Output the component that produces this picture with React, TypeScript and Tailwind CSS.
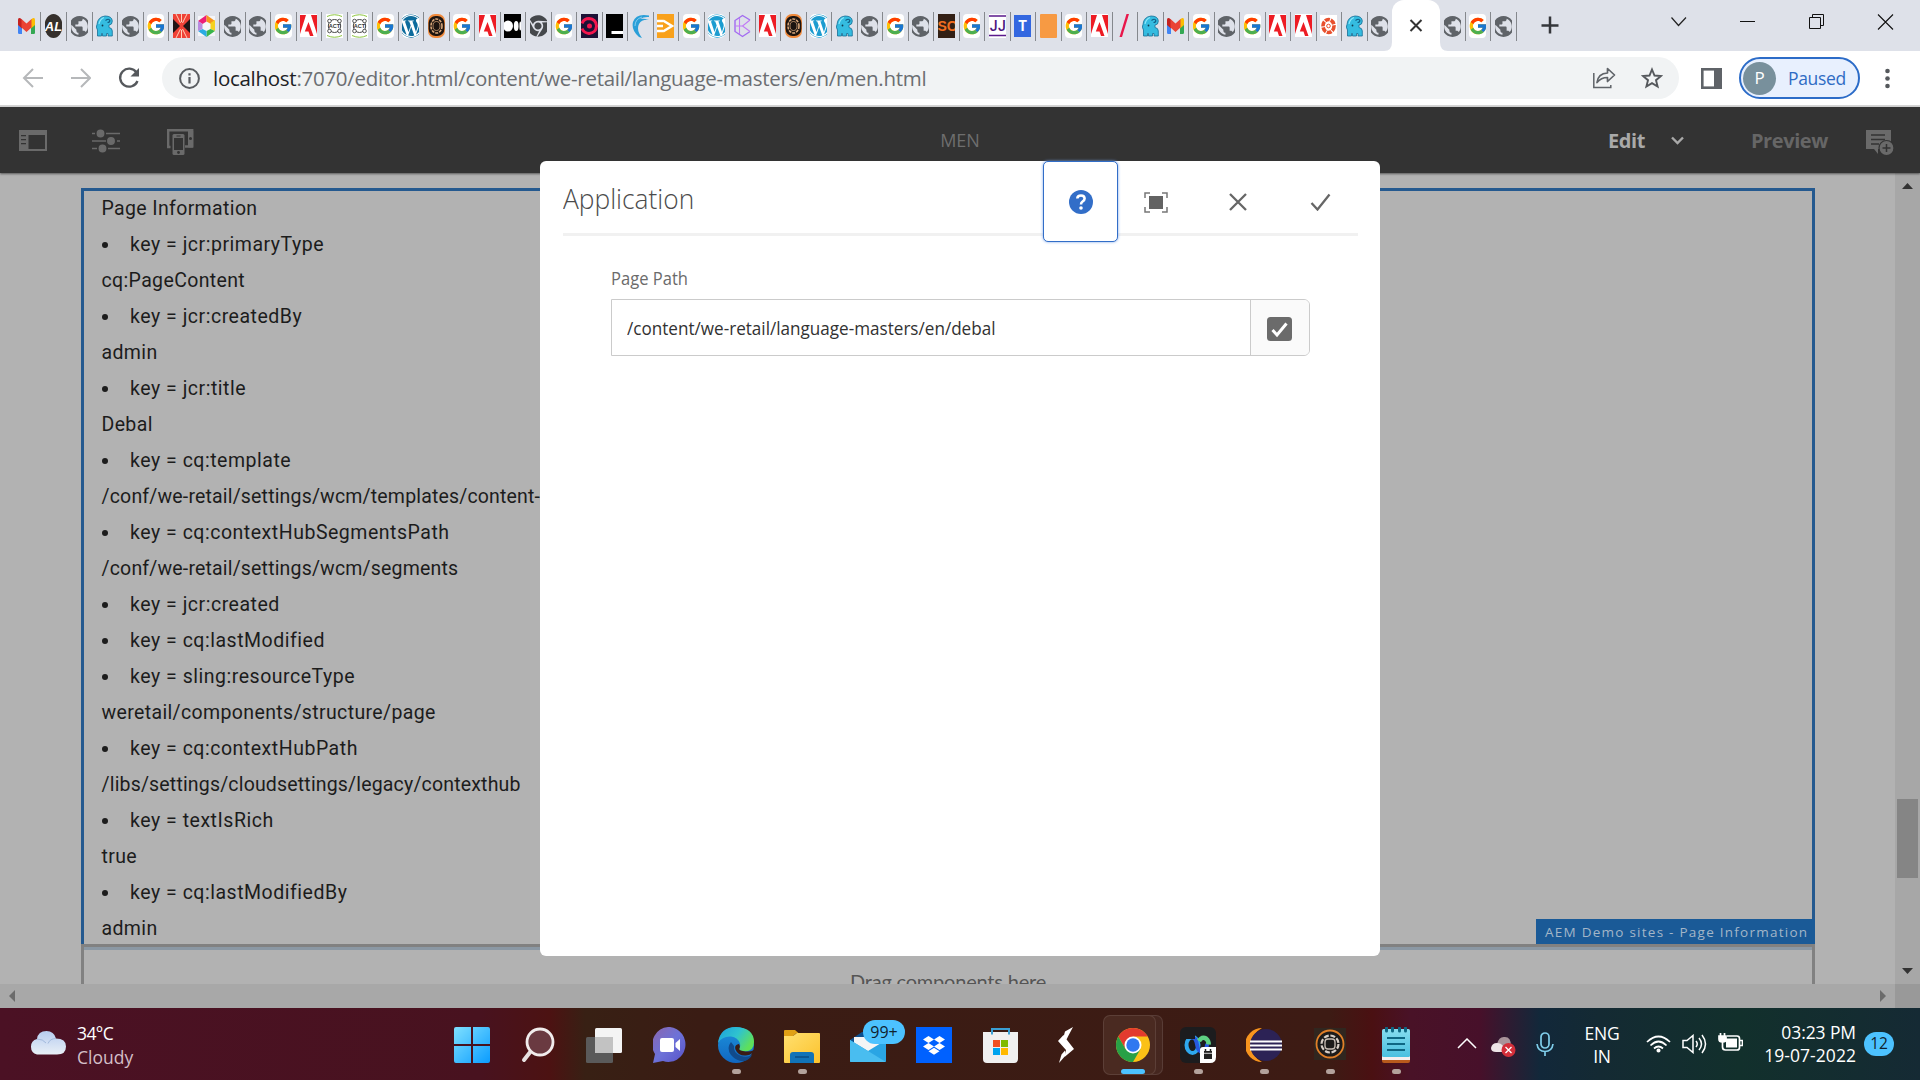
import { ReactNode } from 'react';
import { FcGoogle } from 'react-icons/fc';
import { FaChrome, FaWordpress } from 'react-icons/fa';
import { MdPublic } from 'react-icons/md';

type Fav =
    | 'gmail' | 'al' | 'globe' | 'elephant' | 'google' | 'rays' | 'hex' | 'adobe' | 'act' | 'wp' | 'wpLight' | 'aem'
    | 'medium' | 'chrome' | 'circle' | 'black' | 'swirl' | 'video' | 'cube' | 'so' | 'jj' | 't' | 'orange' | 'slash' | 'flower';

const TABS: Fav[] = [
    'gmail', 'al', 'globe', 'elephant', 'globe', 'google', 'rays', 'hex', 'globe', 'globe',
    'google', 'adobe', 'act', 'act', 'google', 'wp', 'aem', 'google', 'adobe', 'medium',
    'chrome', 'google', 'circle', 'black', 'swirl', 'video', 'google', 'wpLight', 'cube', 'adobe',
    'aem', 'wpLight', 'elephant', 'globe', 'google', 'globe', 'so', 'google', 'jj', 't',
    'orange', 'google', 'adobe', 'slash', 'elephant', 'gmail', 'google', 'globe', 'google', 'adobe',
    'adobe', 'flower', 'elephant', 'globe',
];

const TABS_AFTER: Fav[] = ['globe', 'google', 'globe'];

const ROWS: { text: string; bullet?: boolean }[] = [
    { text: 'Page Information' },
    { text: 'key = jcr:primaryType', bullet: true },
    { text: 'cq:PageContent' },
    { text: 'key = jcr:createdBy', bullet: true },
    { text: 'admin' },
    { text: 'key = jcr:title', bullet: true },
    { text: 'Debal' },
    { text: 'key = cq:template', bullet: true },
    { text: '/conf/we-retail/settings/wcm/templates/content-page' },
    { text: 'key = cq:contextHubSegmentsPath', bullet: true },
    { text: '/conf/we-retail/settings/wcm/segments' },
    { text: 'key = jcr:created', bullet: true },
    { text: 'key = cq:lastModified', bullet: true },
    { text: 'key = sling:resourceType', bullet: true },
    { text: 'weretail/components/structure/page' },
    { text: 'key = cq:contextHubPath', bullet: true },
    { text: '/libs/settings/cloudsettings/legacy/contexthub' },
    { text: 'key = textIsRich', bullet: true },
    { text: 'true' },
    { text: 'key = cq:lastModifiedBy', bullet: true },
    { text: 'admin' },
];

const rowTracking = (row: { text: string; bullet?: boolean }) => {
    if (row.bullet) return 'tracking-[0.520px]';
    return row.text.startsWith('/') ? 'tracking-[0.170px]' : 'tracking-[0.360px]';
};

const favShapes: Record<Fav, ReactNode> = {
    gmail: (
        <>
            <path d="M0 7.500h4V20H1.200Q0 20 0 18.800z" fill="#4285f4" />
            <path d="M13 7.500h4v11.300q0 1.200-1.200 1.200H13z" fill="#34a853" />
            <path d="M13 5.500Q17 2.500 17 6v5l-4 3.500z" fill="#fbbc04" />
            <path d="M4 14.500L0 11V6q0-3.500 4-.5z" fill="#c5221f" />
            <path d="M3.500 5l5 4.500 5-4.500v8.500l-5 4.500-5-4.500z" fill="#ea4335" />
        </>
    ),
    al: (
        <>
            <ellipse cx="8.500" cy="12" rx="9" ry="12" fill="#35302c" />
            <text x="8.500" y="17" textAnchor="middle" fontFamily="Liberation Sans" fontWeight="700" fontStyle="italic" fontSize="13" fill="#fff">AL</text>
        </>
    ),
    globe: null,
    elephant: (
        <>
            <path d="M1.500 22v-6Q-.5 13 1 10.500 1.500 3 9 2q7 0 7.300 5 0 4-3.300 4v2.500q3.300.5 3.300 3.500v5H12v-2.500h-1.500V22h-4v-2.500H5.500V22z" fill="#35bce0" stroke="#176f96" strokeWidth=".8" />
            <path d="M9.500 6.500q3.500-2.500 4.300 0 0 2-2.300 2" fill="none" stroke="#125f86" strokeWidth="1.200" />
            <path d="M3 10q1-5 5-6.500" fill="none" stroke="#8be7fa" strokeWidth="1.200" />
            <circle cx="6.500" cy="11.500" r=".9" fill="#103a50" />
        </>
    ),
    google: <rect width="17" height="24" rx="4" fill="#fff" />,
    rays: (
        <>
            <rect width="17" height="24" fill="#ef4136" />
            <path d="M0 5l7 7-7 7zM17 5l-7 7 7 7z" fill="#201516" />
            <path d="M3 0l4.500 9M8.500 0v8M14 0L9.500 9M3 24l4.500-9M8.500 24v-8M14 24l-4.500-9" stroke="#ffd0b8" strokeWidth="1" />
        </>
    ),
    hex: (
        <>
            <rect y="2" width="17" height="20" fill="#f4f5f8" />
            <path d="M0 7l8.500-6v6.500L4.500 10z" fill="#ec1e79" />
            <path d="M8.500 1L17 7l-4 3-4.500-2.500z" fill="#f7941d" />
            <path d="M17 6v11l-4.500-2V9z" fill="#f5d21f" />
            <path d="M17 17l-8.500 6v-6l4-2z" fill="#39b54a" />
            <path d="M8.500 23L0 17l4.500-2 4 2z" fill="#29abe2" />
            <path d="M0 17V7l4.500 3v5z" fill="#b98be0" />
        </>
    ),
    adobe: (
        <>
            <rect width="17" height="23" fill="#fff" />
            <path d="M0 1h6L0 20zM17 1h-6l6 19zM8.500 8l5 14H10l-1.500-4.500H4.800z" fill="#ed1c24" />
        </>
    ),
    act: (
        <>
            <rect width="17" height="24" fill="#fff" />
            <path d="M1 2.500Q8.500-1 16 2.500M1 21.500q7.500 3.500 15 0" stroke="#8dc63f" fill="none" />
            <ellipse cx="8.500" cy="12" rx="6.200" ry="6.500" fill="none" stroke="#444" strokeWidth="1" />
            <circle cx="3.500" cy="7" r="1.800" fill="#fff" stroke="#444" strokeWidth=".9" />
            <circle cx="13.500" cy="7" r="1.800" fill="#fff" stroke="#444" strokeWidth=".9" />
            <circle cx="3.500" cy="17" r="1.800" fill="#fff" stroke="#444" strokeWidth=".9" />
            <circle cx="13.500" cy="17" r="1.800" fill="#fff" stroke="#444" strokeWidth=".9" />
            <text x="8.500" y="14" textAnchor="middle" fontFamily="Liberation Sans" fontWeight="700" fontSize="5.500" fill="#333">ACT</text>
        </>
    ),
    wp: <rect width="17" height="24" rx="5" fill="#fff" />,
    wpLight: <rect width="17" height="24" rx="5" fill="#fff" />,
    aem: (
        <>
            <rect width="17" height="24" rx="7" fill="#f08a3c" />
            <rect x=".6" y="2" width="15.800" height="20" rx="7" fill="#1c1410" />
            <ellipse cx="8.500" cy="12" rx="5.500" ry="7" fill="none" stroke="#d9a77a" strokeWidth="1.600" strokeDasharray="3 1" />
            <ellipse cx="8.500" cy="12" rx="3.500" ry="4.500" fill="none" stroke="#c99b72" strokeWidth=".8" />
        </>
    ),
    medium: (
        <>
            <rect width="17" height="24" fill="#000" />
            <ellipse cx="4" cy="12" rx="5" ry="5.500" fill="#fff" />
            <ellipse cx="12.200" cy="12" rx="2.400" ry="5" fill="#fff" />
            <ellipse cx="16.300" cy="12" rx=".9" ry="4.500" fill="#fff" />
        </>
    ),
    chrome: null,
    circle: (
        <>
            <rect width="17" height="24" fill="#1d1236" />
            <circle cx="8.500" cy="12" r="2.500" fill="#f5164e" />
            <path d="M1 9.500q2-5 7-5 7 .500 7.500 7.500-.5 7-7.500 7.500-5-.5-7-5" fill="none" stroke="#f5164e" strokeWidth="3" />
        </>
    ),
    black: (
        <>
            <rect width="17" height="24" fill="#000" />
            <rect x="5.500" y="17" width="11.500" height="3" fill="#fff" />
        </>
    ),
    swirl: (
        <>
            <path d="M17 1.500Q4-1 1 8q-2 8 6 15l3 1q-6-8-3-14 3-5 10-4-5-2-9-1 4-2.500 9-2z" fill="#2a9fd8" />
            <path d="M3 12q0-7 7-9" fill="none" stroke="#8fd3ef" strokeWidth=".9" />
        </>
    ),
    video: (
        <>
            <rect width="17" height="24" fill="#f9a11b" />
            <path d="M0 7h6M0 12h6M0 17h6M6 6.500l9 5.500-9 5.500" fill="none" stroke="#fff" strokeWidth="2.600" />
        </>
    ),
    cube: (
        <>
            <path d="M16 6L8.500 1.500 1 6.500v11l7.500 5 7.500-5" fill="none" stroke="#a26bf0" strokeWidth="1.400" />
            <path d="M16 6l-7.500 6 7.500 5.500M5.500 4v16M1 12h7.500" fill="none" stroke="#c07af5" strokeWidth="1.100" />
        </>
    ),
    so: (
        <>
            <rect width="17" height="24" fill="#332015" />
            <text x="-.5" y="17" fontFamily="Liberation Sans" fontWeight="700" fontSize="14" fill="#f26f21">SO</text>
        </>
    ),
    jj: (
        <>
            <rect width="17" height="24" fill="#fff" />
            <path d="M0 2h17M0 21.500h17" stroke="#5b1b8c" strokeWidth="1.400" />
            <text x="9" y="16.500" textAnchor="middle" fontFamily="Roboto" fontWeight="500" fontSize="14" letterSpacing=".500" fill="#4b1480">JJ</text>
        </>
    ),
    t: (
        <>
            <rect y="1" width="17" height="22" fill="#3367e0" />
            <text x="8.500" y="17" textAnchor="middle" fontFamily="Roboto" fontWeight="700" fontSize="14" fill="#fff">T</text>
        </>
    ),
    orange: <rect width="17" height="24" rx="1" fill="#f79a43" />,
    slash: <path d="M10.500 0h2.500L6 23H3.500z" fill="#e8174b" />,
    flower: (
        <>
            <rect y="1" width="17" height="21" fill="#fff" />
            <ellipse cx="8.500" cy="12" rx="5.500" ry="6.500" fill="none" stroke="#e8502e" strokeWidth="3.600" strokeDasharray="5 1" />
            <circle cx="8.500" cy="12" r="1.800" fill="none" stroke="#e8502e" />
        </>
    ),
};

const Favicon = ({ kind }: { kind: Fav }) => (
    <span className="relative block h-6 w-[17px] shrink-0 overflow-hidden">
        <svg width="17" height="24" viewBox="0 0 17 24">{favShapes[kind]}</svg>
        {kind === 'globe' && <MdPublic className="absolute -top-[0.500px] -left-1 h-[25px] w-[25px] max-w-none text-[#5f6368]" />}
        {kind === 'chrome' && <FaChrome className="absolute top-[1px] left-[-2.500px] h-[22px] w-[22px] max-w-none text-[#45484c]" />}
        {kind === 'google' && <FcGoogle className="absolute top-[2px] left-[-1.500px] h-5 w-5 max-w-none" />}
        {kind === 'wp' && <FaWordpress className="absolute top-0 left-[-3.500px] h-6 w-6 max-w-none text-[#0d6b9c]" />}
        {kind === 'wpLight' && <FaWordpress className="absolute top-0 left-[-3.500px] h-6 w-6 max-w-none text-[#1c9cd0]" />}
    </span>
);

const TabStrip = () => (
    <div className="flex h-[51px] bg-[#dee1e9]">
        <div className="flex items-start pl-[13.500px] pt-3">
            {TABS.map((kind, i) => (
                <div
                    key={i}
                    className={`flex h-[29px] w-[25.500px] items-start justify-center pt-[2px] first:w-[27px] last:w-[24.500px] nth-2:w-[26.500px] ${i < TABS.length - 1 ? 'border-r border-[#85888d]' : ''}`}
                >
                    <Favicon kind={kind} />
                </div>
            ))}
        </div>
        <div className="relative h-full w-12 rounded-t-xl bg-white">
            <svg className="absolute bottom-0 -left-2 z-10" width="64" height="9" viewBox="0 0 64 9">
                <path d="M0 9Q8 9 8 0v9zM64 9Q56 9 56 0v9z" fill="#fff" />
            </svg>
            <svg className="absolute top-[18px] left-[17px]" width="14" height="14" viewBox="0 0 14 14">
                <path d="M1.500 2l11 11M12.500 2l-11 11" stroke="#333" strokeWidth="2" />
            </svg>
        </div>
        <div className="flex items-start pt-3">
            {TABS_AFTER.map((kind, i) => (
                <div key={i} className="flex h-[29px] w-[25.500px] items-start justify-center border-r border-[#85888d] pt-[2px]">
                    <Favicon kind={kind} />
                </div>
            ))}
        </div>
        <svg className="mt-4 ml-6" width="18" height="18" viewBox="0 0 18 18">
            <path d="M9 .5v17M.5 9.500h17" stroke="#35373b" strokeWidth="2.500" />
        </svg>
        <div className="ml-auto flex items-start gap-[52px] pt-3.5 pr-[26px]">
            <svg width="17" height="17" viewBox="0 0 17 17"><path d="M1.500 3.500l7 8 7.500-8" fill="none" stroke="#222" strokeWidth="1.200" /></svg>
            <svg width="17" height="17" viewBox="0 0 17 17"><path d="M1 7.500h15" stroke="#111" /></svg>
            <svg width="17" height="17" viewBox="0 0 17 17"><path d="M1.500 3.500h11v11h-11zM4.500 3.500v-3h11v11h-3" fill="none" stroke="#111" /></svg>
            <svg width="17" height="17" viewBox="0 0 17 17"><path d="M1 .5l15 15M16 .5l-15 15" stroke="#111" strokeWidth="1.100" /></svg>
        </div>
    </div>
);

const AddressBar = () => (
    <div className="flex h-14 items-center border-b-2 border-[#d6d6d6] bg-white font-['Open_Sans',sans-serif]">
        <div className="flex items-center gap-7 pl-[22px]">
            <svg width="21" height="20" viewBox="0 0 21 20"><path d="M21 10H2M11 1L2 10l9 9" fill="none" stroke="#b6b8ba" strokeWidth="2" /></svg>
            <svg width="20" height="20" viewBox="0 0 20 20"><path d="M0 10h19M10 1l9 9-9 9" fill="none" stroke="#b6b8ba" strokeWidth="2" /></svg>
            <svg className="-ml-px" width="22" height="22" viewBox="0 0 22 22">
                <path d="M18.500 5.500A9 9 0 1 0 19.500 14" fill="none" stroke="#55585c" strokeWidth="2.300" />
                <path d="M21 1v8.500h-8.500z" fill="#55585c" />
            </svg>
        </div>
        <div className="ml-[22px] flex h-[42px] w-[1517px] items-center rounded-full bg-[#f1f3f4] pr-4 pl-[17px]">
            <svg width="21" height="21" viewBox="0 0 21 21">
                <circle cx="10.500" cy="10.500" r="9.400" fill="none" stroke="#5a5d61" strokeWidth="2" />
                <path d="M10.500 9v6.500M10.500 5.200v2.300" stroke="#5a5d61" strokeWidth="2.200" />
            </svg>
            <span className="ml-[13px] text-[20.500px] tracking-[-0.275px] whitespace-nowrap text-[#6b6e72]">
                <span className="text-[#202124]">localhost</span>:7070/editor.html/content/we-retail/language-masters/en/men.html
            </span>
            <div className="ml-auto flex items-center gap-[25px]">
                <svg width="24" height="22" viewBox="0 0 24 22">
                    <path d="M1.800 6v14.500h17V18" fill="none" stroke="#5f6368" strokeWidth="1.500" />
                    <path d="M5 15.500Q6 6.500 15.500 6V1.500L22.500 8l-7 6.500V10.500Q9 10.500 5 15.500z" fill="none" stroke="#5f6368" strokeWidth="1.700" strokeLinejoin="round" />
                </svg>
                <svg width="22" height="22" viewBox="0 0 22 22">
                    <path d="M11 2.500l2.500 6 6.500.500-5 4.200 1.600 6.300L11 16.100l-5.600 3.400L7 13.200 2 9l6.500-.5z" fill="none" stroke="#55585c" strokeWidth="1.900" />
                </svg>
            </div>
        </div>
        <svg className="ml-[22px]" width="21" height="21" viewBox="0 0 21 21">
            <rect x="1.300" y="1.300" width="18.400" height="18.400" fill="none" stroke="#5f6368" strokeWidth="2.600" />
            <rect x="13" width="8" height="21" fill="#5f6368" />
        </svg>
        <div className="ml-[17px] flex h-[42px] w-[121px] items-center rounded-full border-2 border-[#2c6cc8] bg-[#e8f0fe] pl-[2px]">
            <span className="flex h-[33px] w-[33px] items-center justify-center rounded-full bg-[#78909c] text-[17px] text-white">P</span>
            <span className="ml-[12px] text-[17.500px] tracking-[-0.350px] text-[#2f6bc4]">Paused</span>
        </div>
        <svg className="ml-[25px]" width="5" height="21" viewBox="0 0 5 21" fill="#55585c">
            <circle cx="2.500" cy="3" r="2.300" /><circle cx="2.500" cy="10.500" r="2.300" /><circle cx="2.500" cy="18" r="2.300" />
        </svg>
    </div>
);

const EditorBar = () => (
    <div className="flex h-[66px] items-center bg-[#333] pt-px font-['Open_Sans',sans-serif] shadow-[0_1px_2px_rgba(0,0,0,0.5)]">
        <div className="flex flex-1 items-center pl-[19px]">
            <svg width="28" height="21" viewBox="0 0 28 21" fill="#6a6a6a">
                <path d="M0 0h28v21H0zM9.500 5v14H26V5zM2 5v1.200h5V5zM2 9v1.200h5V9zM2 13v1.200h5V13z" fillRule="evenodd" />
            </svg>
            <svg className="ml-[45px]" width="28" height="24" viewBox="0 0 28 24" fill="#6a6a6a" stroke="#6a6a6a" strokeWidth="1.500">
                <path d="M0 4.500h3M14 4.500h14M0 12h14M25 12h3M0 19.500h5M16 19.500h12" />
                <circle cx="8.500" cy="4.500" r="3.200" /><circle cx="19" cy="12" r="3.200" /><circle cx="10.500" cy="19.500" r="3.200" />
            </svg>
            <svg className="mt-0.5 ml-[47px]" width="27" height="26" viewBox="0 0 27 26">
                <path d="M3.500 18H1.200V1.200h24V17.500H18" fill="none" stroke="#6a6a6a" strokeWidth="2.400" />
                <rect x="21" y="1" width="5.200" height="17.500" rx="1" fill="#6a6a6a" />
                <circle cx="23.500" cy="9.500" r="1.500" fill="#333" />
                <rect x="5.500" y="5" width="12" height="21" rx="1.500" fill="#6a6a6a" />
                <rect x="7" y="9" width="9" height="12" fill="#333" />
                <circle cx="11.500" cy="23.500" r="1.400" fill="#333" />
                <path d="M9.500 7h4" stroke="#333" />
            </svg>
        </div>
        <div className="pl-[7px] text-[18px] text-[#6e6e6e]">MEN</div>
        <div className="flex flex-1 items-center justify-end pr-[26px] font-bold">
            <span className="text-[20px] tracking-[-0.400px] text-[#a9a9a9]">Edit</span>
            <svg className="ml-[26px]" width="13" height="9" viewBox="0 0 13 9"><path d="M1 1.500l5.500 5.500L12 1.500" fill="none" stroke="#a9a9a9" strokeWidth="2.400" /></svg>
            <span className="ml-[67px] text-[20px] tracking-[-0.400px] text-[#666]">Preview</span>
            <svg className="mt-0.5 ml-[38px]" width="28" height="26" viewBox="0 0 28 26">
                <path d="M0 1h25v19H12v5l-4-5H0z" fill="#6a6a6a" />
                <path d="M5 6h14M5 10.500h14M5 15h8" stroke="#333" strokeWidth="1.500" />
                <circle cx="20.500" cy="19" r="7.500" fill="#6a6a6a" stroke="#333" strokeWidth="1.200" />
                <path d="M20.500 15v8M16.500 19h8" stroke="#333" strokeWidth="1.500" />
            </svg>
        </div>
    </div>
);

const Dialog = () => (
    <div className="absolute top-[161px] left-[540px] z-20 h-[795px] w-[840px] rounded-[6px] bg-white pr-[22px] pl-[23px] font-['Open_Sans',sans-serif]">
        <div className="flex h-[75px] border-b-[3px] border-[#f1f1f1]">
            <h1 className="w-[480px] pt-[18px] text-[27px] leading-10 font-light text-[#4b4b4b]">
                <span className="inline-block origin-left scale-x-[0.975]">Application</span>
            </h1>
            <div className="z-10 flex h-[81px] w-[75px] shrink-0 items-center justify-center rounded-[5px] border-[1.500px] border-[#326ec8] bg-white pt-px shadow-[0_0_3px_#7ba4e8]">
                <svg width="24" height="24" viewBox="0 0 24 24">
                    <circle cx="12" cy="12" r="12" fill="#326ec8" />
                    <path d="M8.300 8.500Q8.500 5.500 12 5.500t3.600 3q0 1.700-2 3-1.600 1.100-1.600 3" fill="none" stroke="#fff" strokeWidth="2.600" />
                    <circle cx="12" cy="18" r="1.800" fill="#fff" />
                </svg>
            </div>
            <div className="flex h-[82px] items-center pl-[26px]">
                <svg width="24" height="21" viewBox="0 0 24 21">
                    <rect x="5" y="4" width="14" height="13" fill="#636363" />
                    <path d="M1 6V1h5M18 1h5v5M23 15v5h-5M6 20H1v-5" fill="none" stroke="#777" strokeWidth="1.500" />
                </svg>
                <svg className="ml-[61px]" width="18" height="18" viewBox="0 0 18 18"><path d="M1 1l16 16M17 1L1 17" stroke="#666" strokeWidth="2.300" /></svg>
                <svg className="ml-[63px]" width="21" height="18" viewBox="0 0 21 18"><path d="M1.500 10l6 6.500L19.500 1.500" fill="none" stroke="#666" strokeWidth="2.300" /></svg>
            </div>
        </div>
        <div className="px-12 pt-[28px]">
            <label htmlFor="page_path" className="block text-[18px] leading-7 text-[#6b6b6b]">
                <span className="inline-block origin-left scale-x-[0.920]">Page Path</span>
            </label>
            <div className="mt-[7px] flex h-[57px] w-[699px] rounded-r-[6px] border border-[#cbcbcb]">
                <div id="page_path" className="flex flex-1 items-center pt-px pl-[15px] text-[18px] text-[#323232]">
                    <span className="inline-block origin-left scale-x-[0.950] whitespace-nowrap">/content/we-retail/language-masters/en/debal</span>
                </div>
                <div className="flex w-[59px] items-center justify-center rounded-r-[5px] border-l border-[#cbcbcb] bg-[#fafafa] pr-[2px]">
                    <svg className="mt-0.5" width="25" height="24" viewBox="0 0 25 24">
                        <rect width="25" height="24" rx="3.500" fill="#6b6b6b" />
                        <path d="M5.500 13l4.500 5L19.500 6.500" fill="none" stroke="#fff" strokeWidth="3" />
                    </svg>
                </div>
            </div>
        </div>
    </div>
);

const PageCanvas = () => (
    <div className="flex h-[835px] bg-[#b2b2b2]">
        <div className="flex flex-1 flex-col overflow-hidden">
            <div className="h-[811px] overflow-hidden pt-[15px] pr-[80px] pl-[81px] font-['Roboto',sans-serif]">
                <div className="h-[756px] border-x-[3px] border-t-[3px] border-[#24598f] pl-[17.500px] text-[19.500px] leading-9 text-[#1c1c1c]">
                    {ROWS.map((row, i) => (
                        <div key={i} className="flex h-9 items-center whitespace-nowrap">
                            {row.bullet && <span className="mr-[22.500px] h-1.5 w-1.5 rounded-full bg-[#1c1c1c]" />}
                            <span className={rowTracking(row)}>{row.text}</span>
                        </div>
                    ))}
                </div>
                <div className="relative h-16 border-x-[3px] border-t-[3px] border-[#818181]">
                    <div className="h-[3px] bg-[#8b98a4]" />
                    <div className="pt-[13px] text-center font-['Lato',sans-serif] text-[20px] leading-9 tracking-[-0.200px] text-[#555]">
                        Drag components here
                    </div>
                    <div className="absolute right-[-3px] bottom-full mb-[3px] flex h-[25px] w-[279px] items-center bg-[#1a5a97] pt-px pl-[9px] font-['Open_Sans',sans-serif] text-[13.500px] tracking-[1.250px] whitespace-nowrap text-[#a3b6c8]">
                        AEM Demo sites - Page Information
                    </div>
                </div>
            </div>
            <div className="flex h-6 items-center justify-between bg-[#a8a8a8] px-[9px]">
                <svg width="6" height="12" viewBox="0 0 6 12"><path d="M6 0v12L0 6z" fill="#6b6b6b" /></svg>
                <svg width="6" height="12" viewBox="0 0 6 12"><path d="M0 0v12l6-6z" fill="#6b6b6b" /></svg>
            </div>
        </div>
        <div className="flex w-[25px] flex-col items-center bg-[#a7a7a7]">
            <svg className="mt-2.5" width="11" height="6" viewBox="0 0 11 6"><path d="M0 6h11L5.500 0z" fill="#333" /></svg>
            <div className="mt-[610px] h-[79px] w-[21px] bg-[#858585]" />
            <svg className="mt-[90px]" width="11" height="6" viewBox="0 0 11 6"><path d="M0 0h11L5.500 6z" fill="#333" /></svg>
            <div className="mt-auto h-6 w-full bg-[#999]" />
        </div>
    </div>
);

const TaskItem = ({ children, dot }: { children: ReactNode; dot?: boolean }) => (
    <div className="relative flex h-full w-[66px] items-center justify-center pt-[2px]">
        {children}
        {dot && <span className="absolute bottom-[6px] left-[29px] h-[5px] w-[9px] rounded-full bg-[#b3a29c]" />}
    </div>
);

const Taskbar = () => (
    <div className="flex h-[72px] bg-[linear-gradient(90deg,#4b1124_0px,#48121f_480px,#4c1212_550px,#382014_585px,#3a1c14_700px,#3d1b14_1330px,#4a1012_1372px,#491227_1410px,#47102a_1480px,#12283a_1540px,#142a33_1600px,#12302c_1740px,#152a34_1920px)] font-['Open_Sans',sans-serif] text-white">
        <div className="flex w-[439px] items-center pl-[29px]">
            <svg className="-mt-0.5" width="37" height="24" viewBox="0 0 37 24">
                <defs>
                    <linearGradient id="cl" x1="0" y1="0" x2="0" y2="1"><stop offset="0" stopColor="#b7cdf0" /><stop offset="1" stopColor="#e9eff6" /></linearGradient>
                </defs>
                <path d="M8 23.500a8 8 0 0 1 0-15.500q1-8 9.500-8Q25 0 27 7.500q10 0 10 8 0 8-9 8z" fill="url(#cl)" />
                <path d="M8 8q6 0 9 4M27 7.500q-6 0-8 5" stroke="#a2b9dc" fill="none" />
            </svg>
            <div className="ml-[11px] pt-[2px] text-[17.500px] leading-6">
                <div className="tracking-[-0.600px]">34°C</div>
                <div className="text-[#d4bfc7]">Cloudy</div>
            </div>
        </div>
        <TaskItem>
            <svg width="36" height="36" viewBox="0 0 36 36">
                <defs><linearGradient id="win" x1="0" y1="0" x2="1" y2="1"><stop offset="0" stopColor="#7fe0ff" /><stop offset="1" stopColor="#0a9cff" /></linearGradient></defs>
                <path d="M2 0h15v17H0V2q0-2 2-2zM19 0h15q2 0 2 2v15H19zM0 19h17v17H2q-2 0-2-2zM19 19h17v15q0 2-2 2H19z" fill="url(#win)" />
            </svg>
        </TaskItem>
        <TaskItem>
            <svg width="34" height="36" viewBox="0 0 34 36">
                <path d="M10 24L3 33" stroke="#e6e0e0" strokeWidth="4" strokeLinecap="round" />
                <circle cx="19" cy="15" r="13" fill="#6a3a41" stroke="#f1ecec" strokeWidth="2.800" />
            </svg>
        </TaskItem>
        <TaskItem>
            <svg width="36" height="35" viewBox="0 0 36 35">
                <rect x="9" width="27" height="25" rx="1.500" fill="#f4f4f4" />
                <rect y="9" width="27" height="26" rx="1.500" fill="#5a5a5a" />
                <rect x="9" y="9" width="18" height="16" fill="#c2c2c2" />
            </svg>
        </TaskItem>
        <TaskItem>
            <svg width="34" height="36" viewBox="0 0 34 36">
                <defs><linearGradient id="chat" x1="0" y1="0" x2="1" y2="1"><stop offset="0" stopColor="#8a66ae" /><stop offset=".5" stopColor="#6d72d8" /><stop offset="1" stopColor="#5852c8" /></linearGradient></defs>
                <path d="M17 0a17 17.500 0 1 1-7 34L0 36l2-9A17 17.500 0 0 1 17 0z" fill="url(#chat)" />
                <rect x="7" y="11" width="14" height="14" rx="2" fill="#fff" />
                <path d="M22.500 16l4.500-4v12l-4.500-4z" fill="#fff" />
            </svg>
        </TaskItem>
        <TaskItem dot>
            <svg width="36" height="36" viewBox="0 0 36 36">
                <defs>
                    <linearGradient id="eg" x1="0" y1="0" x2="1" y2=".5"><stop offset="0" stopColor="#1c9fdc" /><stop offset=".55" stopColor="#2fc3cf" /><stop offset="1" stopColor="#5fe05a" /></linearGradient>
                    <linearGradient id="eb" x1="0" y1="0" x2="0" y2="1"><stop offset="0" stopColor="#1d92dc" /><stop offset="1" stopColor="#1167c0" /></linearGradient>
                </defs>
                <circle cx="18" cy="18" r="18" fill="url(#eb)" />
                <path d="M0 16Q2 0 18 0q18 1 18 15 0 9-9 9.500-7-.5-6-3 2-2 1-5-2-6-9-7Q4 9 0 16z" fill="url(#eg)" />
                <path d="M13 15q-5 6 0 13 6 7 14 6 5-2 7-6-5 3-11 1-8-3-7-10z" fill="#114a8b" />
                <path d="M21 17q-5 1-3.500 5.500Q20 29 28 28.500q4-.5 6.500-2.500l3 1V22q-4 3-10 2.500-7-.500-6-3 1-2-.5-4.500z" fill="#3a1c14" />
            </svg>
        </TaskItem>
        <TaskItem dot>
            <svg className="mt-0.5" width="36" height="33" viewBox="0 0 36 33">
                <defs><linearGradient id="fo" x1="0" y1="0" x2="1" y2="1"><stop offset="0" stopColor="#ffe070" /><stop offset="1" stopColor="#fcc22c" /></linearGradient></defs>
                <path d="M0 1q0-1 1-1h10l4 3.500h-3L9 6H0z" fill="#e0a015" />
                <path d="M0 6h9l4-3h22q1 0 1 1v28q0 1-1 1H1q-1 0-1-1z" fill="url(#fo)" />
                <path d="M6 33V25q0-3 3-3h18q3 0 3 3v8z" fill="#1173b8" />
                <path d="M11 27h14" stroke="#0a4d85" strokeWidth="1.500" />
            </svg>
        </TaskItem>
        <TaskItem>
            <svg className="mt-1" width="36" height="30" viewBox="0 0 36 30">
                <path d="M0 8L12 0h12l12 8v8H0z" fill="#0c4f8f" />
                <path d="M4 5h28v12l-14 6L4 15z" fill="#f5f5f5" />
                <path d="M0 8l18 11L36 8v21q0 1-1 1H1q-1 0-1-1z" fill="#2aa5e4" />
                <path d="M0 8l36 22H1q-1 0-1-1z" fill="#49bdf0" />
            </svg>
            <span className="absolute top-3 left-[28px] flex h-6 w-[42px] items-center justify-center rounded-full bg-[#4cc2ff] text-[16px] text-[#10222e]">99+</span>
        </TaskItem>
        <TaskItem>
            <svg width="36" height="36" viewBox="0 0 36 36">
                <rect width="36" height="36" fill="#0061ff" />
                <path d="M12.500 9l5.500 3.500-5.500 3.500L7 12.500zM23.500 9l5.500 3.500-5.500 3.500-5.500-3.500zM12.500 16l5.500 3.500-5.500 3.500L7 19.500zM23.500 16l5.500 3.500-5.500 3.500-5.500-3.500zM18 20.700l5.500 3.500-5.500 3.500-5.500-3.500z" fill="#fff" />
            </svg>
        </TaskItem>
        <TaskItem>
            <svg width="35" height="35" viewBox="0 0 35 35">
                <path d="M9 7V1h17v6" fill="none" stroke="#3a9fd4" strokeWidth="2" />
                <path d="M0 4h35v27q0 4-4 4H4q-4 0-4-4z" fill="#f0f0f0" />
                <path d="M9 6.500V4M26 6.500V4" stroke="#3a9fd4" strokeWidth="2" />
                <path d="M10 12h7v7h-7z" fill="#f05022" /><path d="M18 12h7v7h-7z" fill="#7fba00" />
                <path d="M10 20h7v7h-7z" fill="#00a4ef" /><path d="M18 20h7v7h-7z" fill="#ffb900" />
            </svg>
        </TaskItem>
        <TaskItem>
            <svg width="16" height="36" viewBox="0 0 16 36" fill="#fff">
                <path d="M15 0L7 4.500 5.500 10l3 2.500 2-4z" />
                <path d="M5.500 8L0 14l8 9-1.500 7L16 22l-7-9z" />
                <path d="M7 23.500l-3.500 4L1 36l7-8z" />
            </svg>
        </TaskItem>
        <TaskItem>
            <span className="absolute top-[7px] left-[13px] h-[60px] w-[51px] rounded-[7px] border border-white/10 bg-white/5" />
            <span className="absolute top-[7px] left-[4px] h-[60px] w-[53px] rounded-[7px] border border-white/10 bg-[#4a2a21]" />
            <svg className="relative left-[0.500px]" width="34" height="34" viewBox="0 0 34 34">
                <circle cx="17" cy="17" r="17" fill="#fbc116" />
                <path d="M2.300 8.500A17 17 0 0 1 31.700 8.500H17L9.600 21.300z" fill="#e33b2e" />
                <path d="M2.300 8.500A17 17 0 0 0 17 34L24.400 21.300H9.600z" fill="#28a046" />
                <circle cx="17" cy="17" r="8.500" fill="#fff" />
                <circle cx="17" cy="17" r="6.700" fill="#3078f0" />
            </svg>
            <span className="absolute bottom-[6px] left-[22px] h-[5px] w-6 rounded-full bg-[#4cc2ff]" />
        </TaskItem>
        <TaskItem dot>
            <svg width="36" height="36" viewBox="0 0 36 36">
                <rect width="36" height="36" rx="6" fill="#1c1c1e" />
                <ellipse cx="12.500" cy="18" rx="6" ry="8" fill="none" stroke="#2ea8ee" strokeWidth="4" />
                <path d="M12 10.500q4 0 5 7t5 7.500q4 0 5-7" fill="none" stroke="#2759e0" strokeWidth="4" strokeLinecap="round" />
                <path d="M19 14q3-5 7-2.500 3 2.500 2.500 6" fill="none" stroke="#5ed183" strokeWidth="4.500" />
                <path d="M4 7h11v5H4z" fill="#1c1c1e" />
                <path d="M20 23q0-3 3-3h13v10q0 6-6 6H20z" fill="#fff" />
                <path d="M24 24h8v8h-8z" fill="#222" /><path d="M25.500 22v3M30.500 22v3" stroke="#222" strokeWidth="1.500" />
                <path d="M24 26.300h8" stroke="#fff" strokeWidth=".8" />
            </svg>
        </TaskItem>
        <TaskItem dot>
            <svg width="36" height="34" viewBox="0 0 36 34">
                <path d="M16 0A17 17 0 0 0 16 34Q5 28 5 17T16 0z" fill="#f7941e" />
                <circle cx="20" cy="17" r="16" fill="#2c2255" />
                <path d="M4 13.500h32M4 17.500h32M4 21.500h32" stroke="#fff" strokeWidth="2" />
            </svg>
        </TaskItem>
        <TaskItem dot>
            <svg className="-mt-0.5" width="32" height="32" viewBox="0 0 32 32">
                <rect width="32" height="32" fill="#30261f" />
                <circle cx="16" cy="16" r="13.500" fill="#1c1b1a" stroke="#e07f28" strokeWidth="1.800" />
                <circle cx="16" cy="16" r="8.500" fill="none" stroke="#d8cfc7" strokeWidth="2.200" strokeDasharray="5 1.700" />
                <rect x="11" y="11" width="10" height="10" rx="3" fill="none" stroke="#c9bfb6" strokeWidth="1.300" />
            </svg>
        </TaskItem>
        <TaskItem dot>
            <svg width="28" height="36" viewBox="0 0 28 36">
                <defs><linearGradient id="np" x1="0" y1="0" x2="0" y2="1"><stop offset="0" stopColor="#86dcee" /><stop offset="1" stopColor="#4ac0e0" /></linearGradient></defs>
                <path d="M0 30h28v4q0 2-2 2H2q-2 0-2-2z" fill="#b85a1c" />
                <rect y="27" width="28" height="6" fill="#f4eeee" />
                <rect y="2" width="28" height="28" rx="1.500" fill="url(#np)" />
                <path d="M5 11h18M5 17h18M5 23h18" stroke="#0e6784" strokeWidth="1.800" />
                <path d="M4.500 1v3M10.500 1v3M17.500 1v3M23.500 1v3" stroke="#0e6784" strokeWidth="3" strokeLinecap="round" />
            </svg>
        </TaskItem>
        <div className="ml-auto flex items-center pr-[26px]">
            <svg className="-mt-0.5" width="20" height="11" viewBox="0 0 20 11"><path d="M1 10l9-9 9 9" fill="none" stroke="#fff" strokeWidth="1.500" /></svg>
            <svg className="mt-1 ml-[14px]" width="25" height="21" viewBox="0 0 25 21">
                <path d="M6 8Q8 0 14 1q6 0 6 9l-5 5H7z" fill="#a8949a" />
                <path d="M5 16q-5 0-5-4 1-5 6-5 4 0 6 3l4 6z" fill="#eee5e7" />
                <circle cx="17.500" cy="14" r="7" fill="#d32f3a" />
                <path d="M14.500 11l6 6M20.500 11l-6 6" stroke="#fff" strokeWidth="1.300" />
            </svg>
            <svg className="ml-[20px]" width="18" height="24" viewBox="0 0 18 24" fill="none" stroke="#7fcdea" strokeWidth="1.700">
                <rect x="5" y="1" width="8" height="15" rx="4" /><path d="M1 12q1 7.500 8 7.500t8-7.500M9 19.500V24" />
            </svg>
            <div className="ml-[30px] w-[36px] pt-[2px] text-center text-[17.500px] leading-[23px] tracking-[-0.200px]">
                <div>ENG</div>
                <div>IN</div>
            </div>
            <svg className="ml-[26px]" width="25" height="18" viewBox="0 0 25 18" fill="none" stroke="#fff" strokeWidth="1.700">
                <path d="M1 7q11.500-11 23 0M4.500 10.500q8-8 16 0M8 13.500q4.500-4 9 0" /><circle cx="12.500" cy="15.500" r="1.200" fill="#fff" />
            </svg>
            <svg className="ml-[11px]" width="25" height="20" viewBox="0 0 25 20" fill="none" stroke="#fff" strokeWidth="1.500">
                <path d="M1 6.500h4l6-5v17l-6-5H1zM14 7q2.500 3 0 6M17 4q5 6 0 12M20 1q7 9 0 18" />
            </svg>
            <svg className="-mt-1 ml-[11px]" width="25" height="20" viewBox="0 0 25 20" fill="none" stroke="#fff" strokeWidth="1.700">
                <path d="M9 4h10q2.500 0 2.500 2.500v9q0 2.500-2.500 2.500H7M22 8.500h2.500v5H22M4.500 10v5q0 3 3 3" />
                <rect x="8" y="6.500" width="11" height="9" fill="#fff" stroke="none" />
                <path d="M1 4h7v3q0 3-3.500 3T1 7zM2.500 1v3M6.500 1v3" fill="#fff" />
            </svg>
            <div className="ml-[13px] w-[100px] text-right text-[17.500px] leading-[23px] whitespace-nowrap">
                <div className="tracking-[-0.100px]">03:23 PM</div>
                <div className="tracking-[0.050px]">19-07-2022</div>
            </div>
            <span className="ml-2 flex h-6 w-[30px] items-center justify-center rounded-full bg-[#4cc2ff] text-[15.500px] text-[#10222e]">12</span>
        </div>
    </div>
);

const App = () => {
    return (
        <div className="relative h-[1080px] w-[1920px] overflow-hidden">
            <TabStrip />
            <AddressBar />
            <div className="relative z-10"><EditorBar /></div>
            <PageCanvas />
            <Taskbar />
            <Dialog />
        </div>
    );
};

export default App;
